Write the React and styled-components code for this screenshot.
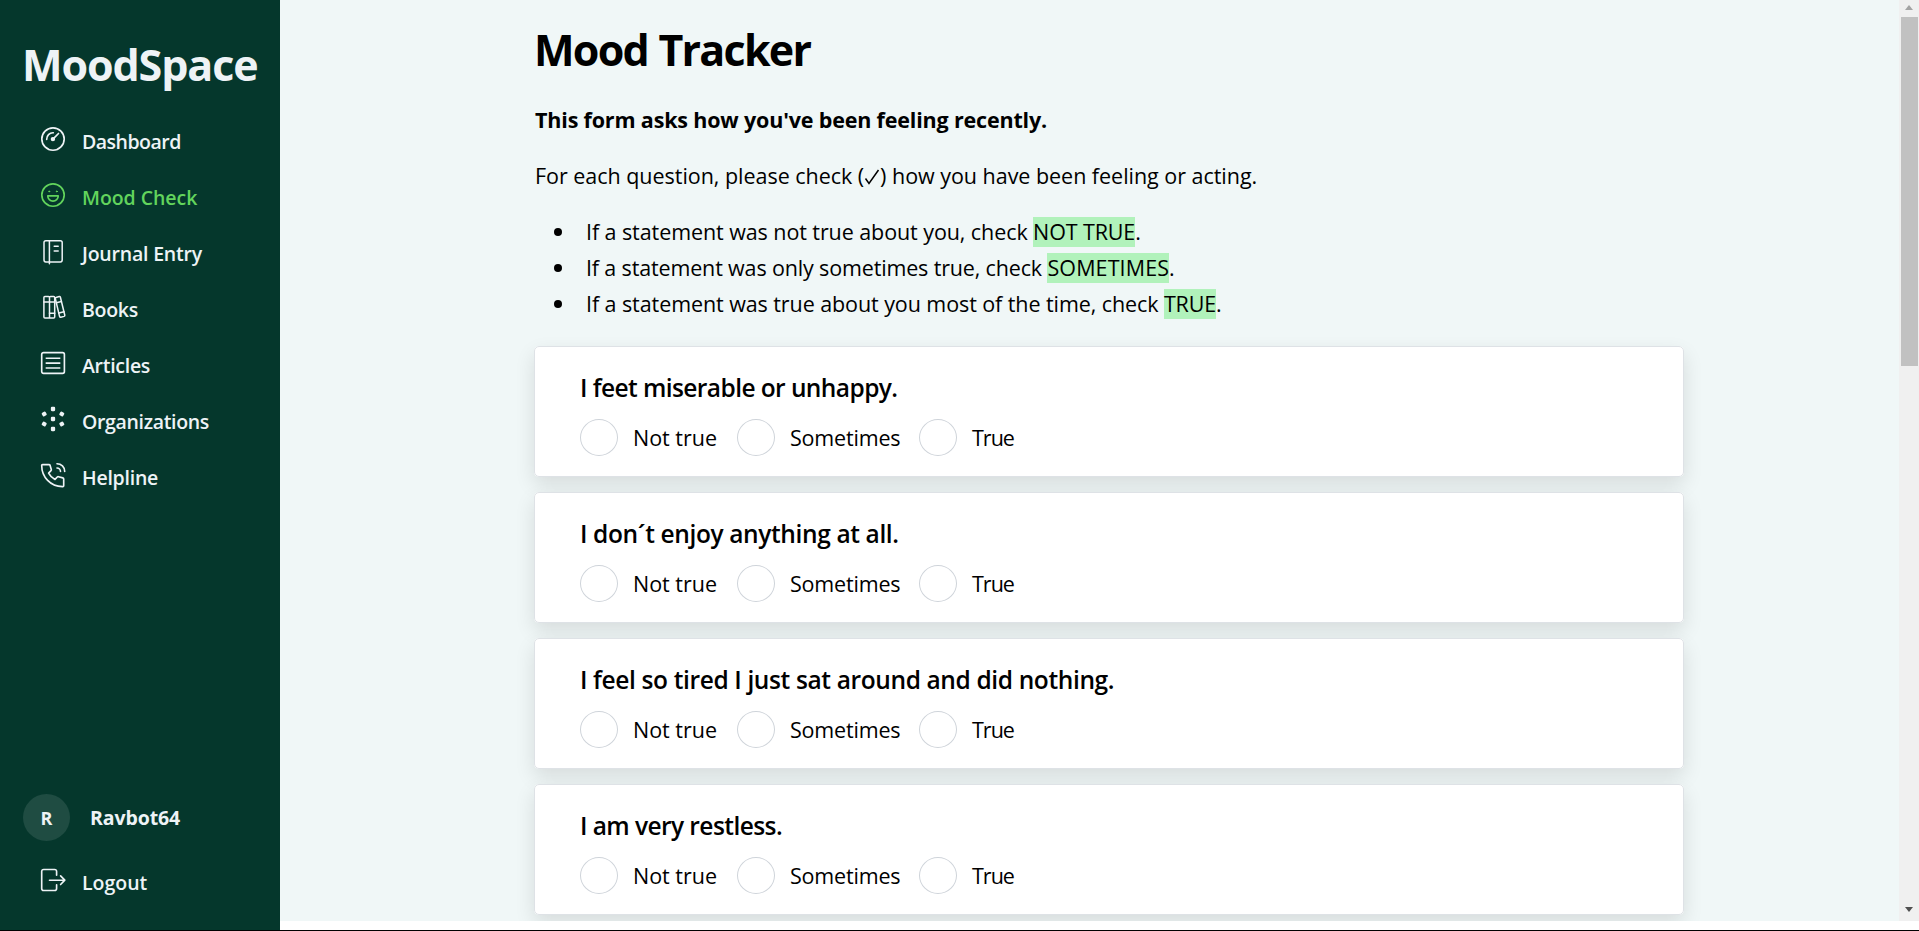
import React from "react";
import styled, { createGlobalStyle } from "styled-components";

const GlobalStyle = createGlobalStyle`
  *, *::before, *::after { box-sizing: border-box; }
  body {
    margin: 0;
    overflow: hidden;
    background: #fff;
    color: #000;
    font-family: "Open Sans", "Noto Sans", sans-serif;
  }
  h1, h2, p, ul, fieldset { margin: 0; padding: 0; border: 0; }
`;

const Page = styled.div`
  display: flex;
  height: 931px;
  border-bottom: 1px solid #000;
`;

const Sidebar = styled.aside`
  flex: 0 0 280px;
  display: flex;
  flex-direction: column;
  background: #05372c;
  color: #eef3f6;
`;

const Brand = styled.div`
  height: 113px;
  padding: 35px 0 0 22px;
  font-size: 43px;
  font-weight: 700;
  line-height: 60px;
  letter-spacing: -1.1px;
`;

const Nav = styled.nav`
  flex: 1;
`;

const NavItem = styled.a`
  display: flex;
  align-items: center;
  height: 56px;
  padding-left: 41px;
  gap: 17px;
  color: ${(p) => (p.$active ? "#62d45c" : "inherit")};
  font-size: 19.5px;
  font-weight: 600;
  letter-spacing: ${(p) => p.$tracking}px;

  svg {
    flex: none;
    width: 24px;
    height: 24px;
    margin-bottom: 4px;
    overflow: visible;
  }
`;

const Profile = styled.div`
  display: flex;
  align-items: center;
  gap: 20px;
  height: 47px;
  margin-bottom: 13px;
  padding-left: 23px;
  font-size: 19.5px;
  font-weight: 700;
  letter-spacing: -0.1px;
`;

const Avatar = styled.span`
  display: grid;
  place-items: center;
  width: 47px;
  height: 47px;
  border-radius: 50%;
  background: #1f4c42;
  font-size: 18px;
`;

const SidebarFooter = styled.div`
  height: 136px;
`;

const Main = styled.main`
  flex: 1;
  height: 921px;
  padding: 20px 0 0 254px;
  overflow: hidden;
  background: #f0f7f7;
`;

const Title = styled.h1`
  font-size: 43px;
  font-weight: 700;
  line-height: 60px;
  letter-spacing: -1.75px;
  word-spacing: 1px;
`;

const Lead = styled.p`
  margin-top: 22px;
  padding-left: 1px;
  font-size: 21.5px;
  font-weight: 700;
  line-height: 36px;
  letter-spacing: -0.17px;
`;

const Text = styled.p`
  margin-top: 20px;
  padding-left: 1px;
  font-size: 21.5px;
  line-height: 36px;
  letter-spacing: -0.03px;
`;

const CheckMark = styled.svg`
  width: 16px;
  height: 16px;
  vertical-align: -1px;
`;

const Rules = styled.ul`
  margin: 20px 0 24px;
  list-style: none;
  font-size: 21.5px;
  line-height: 36px;
`;

const Rule = styled.li`
  display: flex;
  align-items: center;
  padding-left: 20px;
  white-space: pre;
  letter-spacing: ${(p) => p.$tracking}px;

  &::before {
    content: "";
    width: 8px;
    height: 8px;
    margin-right: 24px;
    border-radius: 50%;
    background: #000;
  }
`;

const Mark = styled.mark`
  background: #b1f2bb;
  color: inherit;
  line-height: 30px;
  letter-spacing: ${(p) => p.$tracking}px;
`;

const Questions = styled.div`
  display: flex;
  flex-direction: column;
  gap: 15px;
  width: 1150px;
`;

const Card = styled.fieldset`
  flex: none;
  height: 131px;
  padding: 24px 45px 0;
  border: 1px solid #dee2e6;
  border-radius: 5px;
  background: #fff;
  box-shadow: 0 8px 20px rgba(0, 0, 0, 0.11);
`;

const Question = styled.h2`
  font-size: 24.5px;
  font-weight: 600;
  line-height: 34px;
  letter-spacing: ${(p) => p.$tracking}px;
`;

const Options = styled.div`
  display: flex;
  align-items: center;
  margin-top: 14px;
`;

const Option = styled.label`
  display: flex;
  align-items: center;
  width: ${(p) => p.$width}px;
  font-size: 21.5px;
  line-height: 37px;
  letter-spacing: ${(p) => p.$tracking}px;
`;

const Radio = styled.span`
  width: 38px;
  height: 37px;
  margin-right: 15px;
  border: 1px solid #cfd4da;
  border-radius: 50%;
`;

const Scrollbar = styled.div`
  flex: 0 0 20px;
  display: flex;
  flex-direction: column;
  align-items: center;
  height: 921px;
  background: #f0f0f0;
`;

const Thumb = styled.div`
  width: 17px;
  height: 349px;
  margin-bottom: auto;
  background: #c1c1c1;
`;

const ArrowUp = styled.div`
  height: 17px;
  padding-top: 5px;

  &::before {
    content: "";
    display: block;
    border: solid transparent;
    border-width: 0 4.5px 5px;
    border-bottom-color: #a3a3a3;
  }
`;

const ArrowDown = styled.div`
  height: 14px;

  &::before {
    content: "";
    display: block;
    border: solid transparent;
    border-width: 5px 4.5px 0;
    border-top-color: #505050;
  }
`;

const Icon = ({ children, width = 1.65 }) => (
  <svg
    viewBox="0 0 24 24"
    fill="none"
    stroke="currentColor"
    strokeWidth={width}
    strokeLinecap="round"
    strokeLinejoin="round"
  >
    {children}
  </svg>
);

const DashboardIcon = () => (
  <Icon>
    <circle cx="12" cy="12" r="11.2" />
    <path d="M5.7 12.4A6.3 6.3 0 0 1 12.3 5.8" />
    <circle cx="11.9" cy="12.1" r="1.4" fill="currentColor" />
    <path d="M12.7 11.3l4.8-4.8" />
  </Icon>
);

const MoodIcon = () => (
  <Icon>
    <circle cx="12" cy="12" r="11.2" />
    <path d="M6.8 12.8h10.4v.5a5.2 4.8 0 0 1-10.4 0z" />
    <circle cx="8.2" cy="8.4" r=".5" fill="currentColor" strokeWidth="1" />
    <circle cx="15.8" cy="8.4" r=".5" fill="currentColor" strokeWidth="1" />
  </Icon>
);

const JournalIcon = () => (
  <Icon width={1.5}>
    <rect x="3" y="1.7" width="18.2" height="21.2" rx="1.8" />
    <path d="M8.4 1.7v23M13.2 7.2h4M13.2 12h4" />
  </Icon>
);

const BooksIcon = () => (
  <Icon width={1.5}>
    <path d="M3.9 1.6h3.6q1 0 1 1v19.3q0 1-1 1H3.9q-1 0-1-1V2.6q0-1 1-1zM8.5 2.6q0-1 1-1h3.2q1 0 1 1v19.3q0 1-1 1H9.5q-1 0-1-1z" />
    <path d="M2.9 7.1h10.8M8.5 18.3h5.2" />
    <path d="M15 2.4l3.2-.8q.9-.2 1.2.7l4.4 17.9q.2.9-.7 1.2l-3.3.9q-.9.2-1.2-.7L14.3 3.5q-.2-.9.7-1.1z" />
    <path d="M15.3 7.7l5.1-1.3M17.9 18l5.1-1.3" />
  </Icon>
);

const ArticlesIcon = () => (
  <Icon>
    <rect x=".7" y="1.6" width="22.7" height="20.8" rx="1.8" />
    <path d="M5.5 7.2h13M5.5 12.1h13M5.5 17h13" strokeLinecap="square" />
  </Icon>
);

const DOTS = [
  [12, 2, 0],
  [12, 12, 0],
  [12, 22, 0],
  [3.2, 7, 60],
  [20.8, 7, 30],
  [3.2, 17, 30],
  [20.8, 17, 60],
];

const OrganizationsIcon = () => (
  <Icon width={1.5}>
    {DOTS.map(([x, y, angle]) => (
      <rect
        key={`${x}-${y}`}
        x={x - 1.4}
        y={y - 1.4}
        width="2.8"
        height="2.8"
        rx=".4"
        fill="currentColor"
        transform={`rotate(${angle} ${x} ${y})`}
      />
    ))}
  </Icon>
);

const PhoneIcon = () => (
  <Icon>
    <path d="M1.6 1.6h6.3q.9 0 1.2.8l1.2 4.1q.2.7-.3 1.2l-2.4 2.4a14 14 0 0 0 6.4 6.3l2.3-2.4q.5-.5 1.2-.3l4.3 1.2q.9.3.9 1.2v6.6q0 .9-.9.9C9.5 23.8.7 14 .7 2.5q0-.9.9-.9z" />
    <path d="M16 .7a7.700 7.700 0 0 1 7.700 7.700M16 5a3.500 3.500 0 0 1 3.500 3.500" />
  </Icon>
);

const LogoutIcon = () => (
  <Icon>
    <path d="M15.6 7.2V3.500q0-2-2-2H2.700q-2 0-2 2v17q0 2 2 2h10.900q2 0 2-2v-3.700" />
    <path d="M8.500 12.200h15M19.600 7.900l4.200 4.300-4.200 4.300" />
  </Icon>
);

const NAV = [
  { label: "Dashboard", icon: DashboardIcon, tracking: -0.5 },
  { label: "Mood Check", icon: MoodIcon, tracking: -0.05 },
  { label: "Journal Entry", icon: JournalIcon, tracking: -0.2 },
  { label: "Books", icon: BooksIcon, tracking: -0.3 },
  { label: "Articles", icon: ArticlesIcon, tracking: -0.28 },
  { label: "Organizations", icon: OrganizationsIcon, tracking: -0.33 },
  { label: "Helpline", icon: PhoneIcon, tracking: -0.24 },
];

const RULES = [
  { text: "If a statement was not true about you, check ", answer: "NOT TRUE", tracking: -0.08, markTracking: -0.13 },
  { text: "If a statement was only sometimes true, check ", answer: "SOMETIMES", tracking: -0.15, markTracking: 0.1 },
  { text: "If a statement was true about you most of the time, check ", answer: "TRUE", tracking: -0.08, markTracking: -0.2 },
];

const QUESTIONS = [
  { text: "I feet miserable or unhappy.", tracking: -0.58 },
  { text: "I don´t enjoy anything at all.", tracking: -0.37 },
  { text: "I feel so tired I just sat around and did nothing.", tracking: -0.37 },
  { text: "I am very restless.", tracking: -0.57 },
];

const OPTIONS = [
  { label: "Not true", width: 157, tracking: 0 },
  { label: "Sometimes", width: 182, tracking: -0.18 },
  { label: "True", width: 110, tracking: -1 },
];

const ACTIVE = "Mood Check";

export default function App() {
  return (
    <>
      <GlobalStyle />
      <Page>
        <Sidebar>
          <Brand>MoodSpace</Brand>
          <Nav>
            {NAV.map(({ label, icon: ItemIcon, tracking }) => (
              <NavItem key={label} $active={label === ACTIVE} $tracking={tracking}>
                <ItemIcon />
                {label}
              </NavItem>
            ))}
          </Nav>
          <SidebarFooter>
            <Profile>
              <Avatar>R</Avatar>
              Ravbot64
            </Profile>
            <NavItem $tracking={0}>
              <LogoutIcon />
              Logout
            </NavItem>
          </SidebarFooter>
        </Sidebar>
        <Main>
          <Title>Mood Tracker</Title>
          <Lead>This form asks how you've been feeling recently.</Lead>
          <Text>
            For each question, please check (
            <CheckMark viewBox="0 0 16 16" fill="none" stroke="currentColor" strokeWidth="1.5">
              <path d="M1.5 9.5l3.5 5L14.5 1" />
            </CheckMark>
            ) how you have been feeling or acting.
          </Text>
          <Rules>
            {RULES.map((rule) => (
              <Rule key={rule.answer} $tracking={rule.tracking}>
                {rule.text}
                <Mark $tracking={rule.markTracking}>{rule.answer}</Mark>.
              </Rule>
            ))}
          </Rules>
          <Questions>
            {QUESTIONS.map((question) => (
              <Card key={question.text}>
                <Question $tracking={question.tracking}>{question.text}</Question>
                <Options>
                  {OPTIONS.map((option) => (
                    <Option key={option.label} $width={option.width} $tracking={option.tracking}>
                      <Radio />
                      {option.label}
                    </Option>
                  ))}
                </Options>
              </Card>
            ))}
          </Questions>
        </Main>
        <Scrollbar>
          <ArrowUp />
          <Thumb />
          <ArrowDown />
        </Scrollbar>
      </Page>
    </>
  );
}
